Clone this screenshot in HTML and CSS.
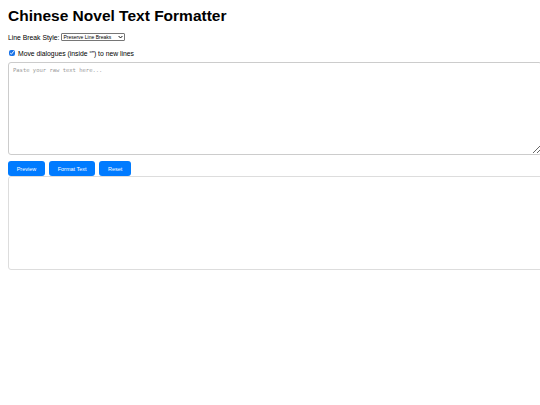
FILE: index.html
```html
<!DOCTYPE html>
<html>
<head>
<meta charset="utf-8">
<link rel="stylesheet" href="styles.css">
</head>
<body>
<h1 class="title">Chinese Novel Text Formatter</h1>
<div class="row">
  <label class="label">Line Break Style:</label>
  <select class="select"><option>Preserve Line Breaks</option></select>
</div>
<div class="row check-row">
  <input type="checkbox" class="check" checked>
  <span class="label">Move dialogues (inside “”) to new lines</span>
</div>
<textarea class="input" placeholder="Paste your raw text here..."></textarea>
<div class="buttons">
  <button class="btn">Preview</button>
  <button class="btn">Format Text</button>
  <button class="btn">Reset</button>
</div>
<div class="output"></div>
</body>
</html>
```
FILE: styles.css
```css
html, body { margin: 0; padding: 0; background: #fff; }
body {
  padding: 8px;
  font-family: "Liberation Sans", Arial, sans-serif;
  color: #000;
  overflow: hidden;
}
.title {
  font-size: 15.5px;
  font-weight: bold;
  margin: 0 0 8px 0;
  line-height: 16px;
}
.row {
  display: flex;
  align-items: center;
  gap: 2px;
  height: 10px;
}
.label { font-size: 6.8px; }
.select {
  appearance: none;
  -webkit-appearance: none;
  font-family: "Liberation Sans", Arial, sans-serif;
  font-size: 5px;
  height: 8px;
  line-height: 6px;
  width: 64px;
  padding: 0 0 0 1px;
  border: 1px solid #767676;
  border-radius: 1px;
  background: #fff url("data:image/svg+xml,%3Csvg xmlns='http://www.w3.org/2000/svg' width='5' height='4' viewBox='0 0 5 4'%3E%3Cpath d='M0.6 1 L2.5 3 L4.4 1' fill='none' stroke='%23000' stroke-width='0.9'/%3E%3C/svg%3E") no-repeat right 1px center;
  background-size: 5px 4px;
  margin-left: 0;
  color: #000;
}
.check-row { margin-top: 6px; gap: 3px; }
.check {
  width: 6px;
  height: 6px;
  margin: 0 0 0 1px;
  accent-color: #1a73e8;
}
.input {
  display: block;
  box-sizing: border-box;
  width: 534px;
  height: 93px;
  margin: 4px 0 0 0;
  padding: 4px;
  border: 1px solid #ccc;
  border-radius: 3px;
  font-family: "DejaVu Sans Mono", monospace;
  font-size: 5.5px;
  resize: vertical;
}
.input::placeholder { color: #999; }
.buttons {
  display: flex;
  gap: 4px;
  margin-top: 6px;
}
.btn {
  background: #007bff;
  color: #fff;
  border: none;
  border-radius: 3px;
  height: 15px;
  padding: 0 8.7px;
  font-family: "Liberation Sans", Arial, sans-serif;
  font-size: 5.5px;
}
.output {
  box-sizing: border-box;
  width: 540px;
  height: 94px;
  border: 1px solid #ddd;
  border-radius: 3px;
}
```
